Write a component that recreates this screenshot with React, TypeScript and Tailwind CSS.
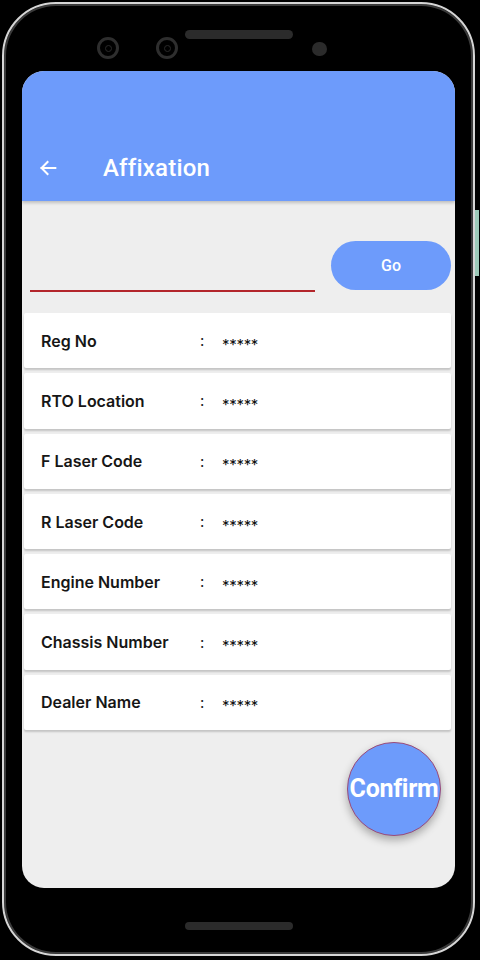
import React from 'react';

const rows = [
  'Reg No',
  'RTO Location',
  'F Laser Code',
  'R Laser Code',
  'Engine Number',
  'Chassis Number',
  'Dealer Name',
];

function BackArrow() {
  return (
    <svg width="22" height="22" viewBox="0 0 24 24" fill="none" stroke="white" strokeWidth="2.2" strokeLinecap="square">
      <path d="M20 12H5" />
      <path d="M11.5 5.5L5 12l6.5 6.5" />
    </svg>
  );
}

export default function App() {
  return (
    <div className="w-[480px] h-[960px] bg-black pt-[2px] pl-[2px]" style={{ fontFamily: 'Roboto, "Noto Sans", sans-serif' }}>
      <div className="relative w-[473px] h-[954px] rounded-[54px] border-2 border-[#d6d6d6] shadow-[inset_0_0_0_2px_#3a3a3a] px-[18px]">
        {/* hardware */}
        <div className="relative h-[67px]">
          <div className="absolute left-[75px] top-[33px] w-[22px] h-[22px] rounded-full border-[3px] border-[#2e2e2e] flex items-center justify-center">
            <div className="w-[7px] h-[7px] rounded-full border border-[#2a2a2a]" />
          </div>
          <div className="absolute left-[134px] top-[33px] w-[22px] h-[22px] rounded-full border-[3px] border-[#2e2e2e] flex items-center justify-center">
            <div className="w-[7px] h-[7px] rounded-full border border-[#2a2a2a]" />
          </div>
          <div className="absolute left-[163px] top-[26px] w-[108px] h-[9px] rounded-full bg-[#2b2b2b]" />
          <div className="absolute left-[290px] top-[38px] w-[15px] h-[14px] rounded-full bg-[#2b2b2b]" />
        </div>
        <div className="absolute right-[-6px] top-[206px] w-[4px] h-[66px] bg-[#9cc9b8]" />

        {/* screen */}
        <div className="h-[817px] rounded-[22px] overflow-hidden bg-[#eeeeee] flex flex-col">
          <div className="h-[130px] bg-[#6d9bfb] shadow-[0_2px_3px_rgba(0,0,0,0.2)] relative z-10">
            <div className="mt-[69px] h-[56px] flex items-center">
              <div className="ml-[15px] w-[24px] flex items-center">
                <BackArrow />
              </div>
              <div className="ml-[42px] text-white text-[24px] font-medium tracking-[0.2px]">Affixation</div>
            </div>
          </div>

          <div className="h-[112px] flex items-start">
            <div className="ml-[8px] mt-[89px] w-[285px] h-[2px] bg-[#b3262b]" />
            <button className="ml-[16px] mt-[40px] w-[120px] h-[49px] rounded-full bg-[#6d9bfb] text-white text-[16px] font-medium">
              Go
            </button>
          </div>

          <div className="pl-[2px] pr-[4px] flex flex-col gap-[5px]">
            {rows.map((r) => (
              <div key={r} className="h-[55.3px] bg-white rounded-[2px] shadow-[0_2px_2px_rgba(0,0,0,0.18)] flex items-center" style={{ fontFamily: 'Inter, "Noto Sans", sans-serif' }}>
                <div className="ml-[17px] w-[159px] text-[16px] font-semibold text-[#161616] leading-none">{r}</div>
                <div className="w-[22px] text-[15px] text-[#222] leading-none">:</div>
                <div className="mt-[7px] text-[15px] text-[#111] leading-none tracking-[-0.3px]">*****</div>
              </div>
            ))}
          </div>

          <div className="flex justify-end pr-[14px] pt-[12px]">
            <div className="w-[94px] h-[94px] rounded-full bg-[#6d9bfb] border border-[#9b4a78] shadow-[0_4px_8px_rgba(0,0,0,0.3)] flex items-center justify-center">
              <span className="text-white text-[25px] font-bold tracking-[-0.3px] whitespace-nowrap">Confirm</span>
            </div>
          </div>
        </div>

        <div className="flex justify-center pt-[34px]">
          <div className="w-[108px] h-[8px] rounded-full bg-[#2b2b2b]" />
        </div>
      </div>
    </div>
  );
}
